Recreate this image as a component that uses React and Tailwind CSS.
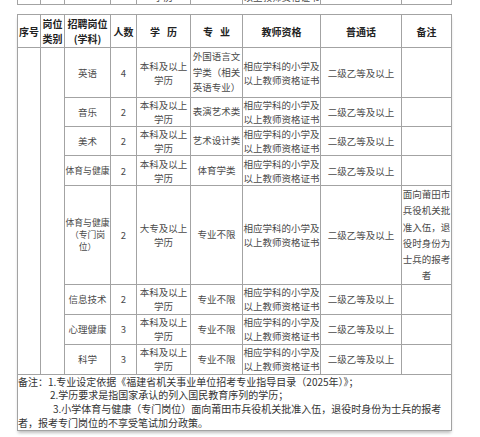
import React from 'react';

const cell = 'border border-[#a3a3a3] p-0 text-center align-middle';
const teacher = (
  <>
    相应学科的小学及
    <br />
    以上教师资格证书
  </>
);
const bk = (
  <>
    本科及以上
    <br />
    学历
  </>
);

const rows = [
  { h: 'h-[50px]', post: '英语', n: 4, edu: bk, major: <>外国语言文<br />学类（相关<br />英语专业）</>, note: '' },
  { h: 'h-[29px]', post: '音乐', n: 2, edu: bk, major: '表演艺术类', note: '' },
  { h: 'h-[27px]', post: '美术', n: 2, edu: bk, major: '艺术设计类', note: '' },
  { h: 'h-[30px]', post: '体育与健康', small: true, n: 2, edu: bk, major: '体育学类', note: '' },
  {
    h: 'h-[98px]',
    post: <>体育与健康<br />（专门岗<br />位）</>,
    small: true,
    n: 2,
    edu: <>大专及以上<br />学历</>,
    major: '专业不限',
    note: <>面向莆田市<br />兵役机关批<br />准入伍，退<br />役时身份为<br />士兵的报考<br />者</>,
  },
  { h: 'h-[30px]', post: '信息技术', n: 2, edu: bk, major: '专业不限', note: '' },
  { h: 'h-[30px]', post: '心理健康', n: 3, edu: bk, major: '专业不限', note: '' },
  { h: 'h-[30px]', post: '科学', n: 3, edu: bk, major: '专业不限', note: '' },
];

const Cols = () => (
  <colgroup>
    <col className="w-[23px]" />
    <col className="w-[24px]" />
    <col className="w-[46px]" />
    <col className="w-[26px]" />
    <col className="w-[54px]" />
    <col className="w-[52px]" />
    <col className="w-[78px]" />
    <col className="w-[81px]" />
    <col className="w-[50px]" />
  </colgroup>
);

const App = () => {
  return (
    <div className="w-[480px] h-[437px] bg-white font-['Noto_Sans_CJK_SC',sans-serif] text-[#4a4a4a] overflow-hidden">
      {/* tail of the previous table, cut off by the screenshot */}
      <div className="h-[5px] overflow-hidden flex flex-col justify-end pl-[17px]">
        <table className="table-fixed border-collapse w-[435px] text-[9.5px] leading-[14px]">
          <Cols />
          <tbody>
            <tr className="h-[30px]">
              <td className={cell}></td>
              <td className={cell}></td>
              <td className={cell}></td>
              <td className={cell}></td>
              <td className={cell}>{bk}</td>
              <td className={cell}></td>
              <td className={cell + ' whitespace-nowrap'}>{teacher}</td>
              <td className={cell}></td>
              <td className={cell}></td>
            </tr>
          </tbody>
        </table>
      </div>

      <div className="mt-[9px] ml-[17px] w-[435px] shadow-[0_3px_3px_-1px_rgba(0,0,0,0.25)]">
        <table className="table-fixed border-collapse w-[435px] text-[9.5px] leading-[14px]">
          <Cols />
          <thead>
            <tr className="h-[33px] text-[10px] font-bold text-[#222] leading-[15px]">
              <th className={cell}>序号</th>
              <th className={cell}>岗位<br />类别</th>
              <th className={cell}>招聘岗位<br />(学科)</th>
              <th className={cell}>人数</th>
              <th className={cell}>学&nbsp;&nbsp;&nbsp;历</th>
              <th className={cell}>专&nbsp;&nbsp;&nbsp;业</th>
              <th className={cell}>教师资格</th>
              <th className={cell}>普通话</th>
              <th className={cell}>备注</th>
            </tr>
          </thead>
          <tbody>
            {rows.map((r, i) => (
              <tr key={i} className={r.h}>
                {i === 0 && (
                  <>
                    <td className={cell} rowSpan={8}></td>
                    <td className={cell} rowSpan={8}></td>
                  </>
                )}
                <td className={cell + (r.small ? ' text-[8.8px] leading-[12px] whitespace-nowrap' : '')}>{r.post}</td>
                <td className={cell}>{r.n}</td>
                <td className={cell}>{r.edu}</td>
                <td className={cell + ' leading-[15.5px]'}>{r.major}</td>
                <td className={cell + ' whitespace-nowrap'}>{teacher}</td>
                <td className={cell + ' whitespace-nowrap'}>二级乙等及以上</td>
                <td className={cell + ' leading-[16.3px] whitespace-nowrap'}>{r.note}</td>
              </tr>
            ))}
            <tr className="h-[53px]">
              <td colSpan={9} className="border border-[#a3a3a3] text-left align-top p-0 text-[10px] leading-[13.7px] text-[#333] whitespace-nowrap">
                <div>备注：1.专业设定依据《福建省机关事业单位招考专业指导目录（2025年）》；</div>
                <div className="pl-[32px]">2.学历要求是指国家承认的列入国民教育序列的学历；</div>
                <div className="indent-[35px]">
                  3.小学体育与健康（专门岗位）面向莆田市兵役机关批准入伍，退役时身份为士兵的报考
                  <br />
                  者，报考专门岗位的不享受笔试加分政策。
                </div>
              </td>
            </tr>
          </tbody>
        </table>
      </div>
    </div>
  );
};

export default App;
